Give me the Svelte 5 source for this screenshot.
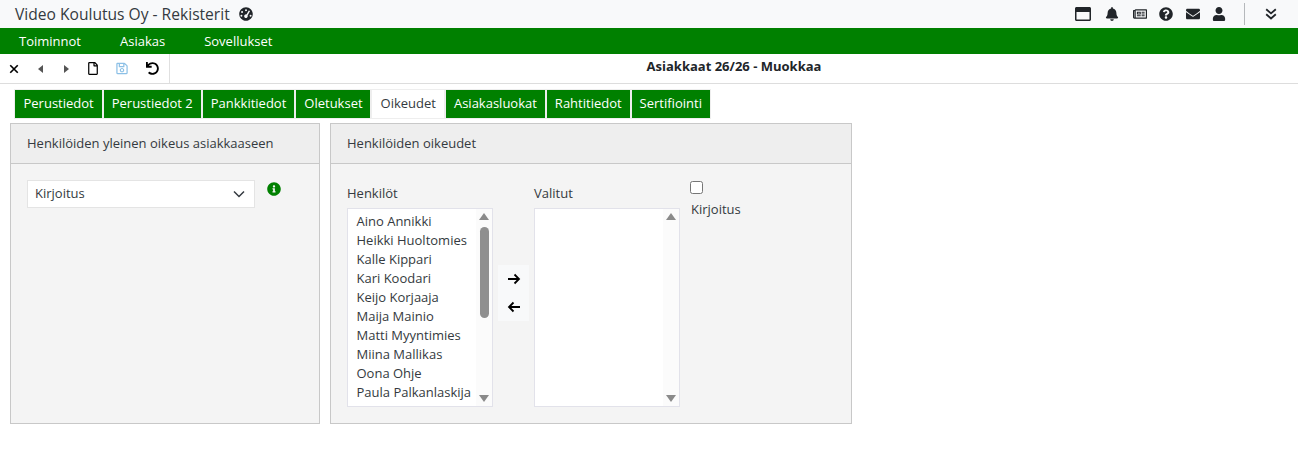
<script>
  const tabs = ['Perustiedot','Perustiedot 2','Pankkitiedot','Oletukset','Oikeudet','Asiakasluokat','Rahtitiedot','Sertifiointi'];
  const people = ['Aino Annikki','Heikki Huoltomies','Kalle Kippari','Kari Koodari','Keijo Korjaaja','Maija Mainio','Matti Myyntimies','Miina Mallikas','Oona Ohje','Paula Palkanlaskija'];
  const menu = ['Toiminnot','Asiakas','Sovellukset'];
</script>

<header class="top">
  <div class="brand">
    <span>Video Koulutus Oy - Rekisterit</span>
    <svg class="gauge" viewBox="0 0 512 512"><path fill="#212529" fill-rule="evenodd" d="M256 8C119 8 8 119 8 256s111 248 248 248 248-111 248-248S393 8 256 8zm0 72a36 36 0 1 1 0 72 36 36 0 0 1 0-72zM112 150a36 36 0 1 1 0 72 36 36 0 0 1 0-72zm-24 130a36 36 0 1 1 0 72 36 36 0 0 1 0-72zm336 0a36 36 0 1 1 0 72 36 36 0 0 1 0-72zM356 128l50 20-92 166c14 34-4 72-40 84-36 10-72-10-82-44-10-36 12-72 48-82 12-4 24-4 34-2z"/></svg>
  </div>
  <div class="tools">
    <svg class="win" viewBox="0 0 512 512"><path d="M464 32H48C21.500 32 0 53.500 0 80v352c0 26.500 21.500 48 48 48h416c26.500 0 48-21.500 48-48V80c0-26.500-21.500-48-48-48zm-6 400H54c-3.300 0-6-2.700-6-6V192h416v234c0 3.300-2.700 6-6 6z"/></svg>
    <svg class="i14 bell" viewBox="0 0 448 512"><path d="M224 512c35.320 0 63.970-28.650 63.970-64H160.030c0 35.350 28.650 64 63.970 64zm215.390-149.710c-19.320-20.760-55.470-51.990-55.470-154.290 0-77.700-54.480-139.900-127.940-155.160V32c0-17.670-14.320-32-31.980-32s-31.980 14.330-31.980 32v20.840C118.560 68.100 64.080 130.300 64.080 208c0 102.300-36.150 133.530-55.470 154.290-6 6.450-8.660 14.160-8.610 21.710.11 16.400 12.980 32 32.100 32h383.800c19.120 0 32-15.600 32.100-32 .05-7.550-2.610-15.270-8.610-21.710z"/></svg>
    <svg class="i14" viewBox="0 0 576 512"><path d="M552 64H112c-20.858 0-38.643 13.377-45.250 32H24c-13.255 0-24 10.745-24 24v272c0 30.928 25.072 56 56 56h496c13.255 0 24-10.745 24-24V88c0-13.255-10.745-24-24-24zM48 392V144h16v248c0 4.411-3.589 8-8 8s-8-3.589-8-8zm480 8H111.422c.374-2.614.578-5.283.578-8V112h416v288zM172 280h136c6.627 0 12-5.373 12-12v-96c0-6.627-5.373-12-12-12H172c-6.627 0-12 5.373-12 12v96c0 6.627 5.373 12 12 12zm28-80h80v40h-80v-40zm-40 140v-24c0-6.627 5.373-12 12-12h136c6.627 0 12 5.373 12 12v24c0 6.627-5.373 12-12 12H172c-6.627 0-12-5.373-12-12zm192 0v-24c0-6.627 5.373-12 12-12h104c6.627 0 12 5.373 12 12v24c0 6.627-5.373 12-12 12H364c-6.627 0-12-5.373-12-12zm0-144v-24c0-6.627 5.373-12 12-12h104c6.627 0 12 5.373 12 12v24c0 6.627-5.373 12-12 12H364c-6.627 0-12-5.373-12-12zm0 72v-24c0-6.627 5.373-12 12-12h104c6.627 0 12 5.373 12 12v24c0 6.627-5.373 12-12 12H364c-6.627 0-12-5.373-12-12z"/></svg>
    <svg class="i14" viewBox="0 0 512 512"><path d="M504 256c0 136.997-111.043 248-248 248S8 392.997 8 256C8 119.083 119.043 8 256 8s248 111.083 248 248zM262.655 90c-54.497 0-89.255 22.957-116.549 63.758-3.536 5.286-2.353 12.415 2.715 16.258l34.699 26.310c5.205 3.947 12.621 3.008 16.665-2.122 17.864-22.658 30.113-35.797 57.303-35.797 20.429 0 45.698 13.148 45.698 32.958 0 14.976-12.363 22.667-32.534 33.976C247.128 238.528 216 254.941 216 296v4c0 6.627 5.373 12 12 12h56c6.627 0 12-5.373 12-12v-1.333c0-28.462 83.186-29.647 83.186-106.667 0-58.002-60.165-102-116.531-102zM256 338c-25.365 0-46 20.635-46 46 0 25.364 20.635 46 46 46s46-20.636 46-46c0-25.365-20.635-46-46-46z"/></svg>
    <svg class="i14" viewBox="0 0 512 512"><path d="M502.300 190.800c3.900-3.100 9.700-.2 9.700 4.700V400c0 26.500-21.500 48-48 48H48c-26.500 0-48-21.500-48-48V195.600c0-5 5.700-7.800 9.700-4.700 22.400 17.400 52.100 39.500 154.100 113.600 21.100 15.400 56.700 47.800 92.200 47.600 35.700.3 72-32.800 92.300-47.600 102-74.100 131.600-96.300 154-113.700zM256 320c23.200.4 56.600-29.200 73.400-41.400 132.700-96.300 142.800-104.700 173.400-128.700 5.800-4.500 9.200-11.500 9.200-18.900v-19c0-26.500-21.500-48-48-48H48C21.500 64 0 85.500 0 112v19c0 7.400 3.400 14.300 9.200 18.900 30.600 23.900 40.700 32.400 173.400 128.700 16.800 12.200 50.200 41.800 73.400 41.400z"/></svg>
    <svg class="i14 last" viewBox="0 0 448 512"><path d="M224 256c70.700 0 128-57.300 128-128S294.700 0 224 0 96 57.300 96 128s57.300 128 128 128zm89.600 32h-16.700c-22.200 10.200-46.900 16-72.900 16s-50.600-5.800-72.900-16h-16.700C60.200 288 0 348.200 0 422.400V464c0 26.500 21.500 48 48 48h352c26.500 0 48-21.500 48-48v-41.600c0-74.200-60.200-134.400-134.400-134.400z"/></svg>
    <span class="sep"></span>
    <svg class="dbl" viewBox="0 0 12 12"><path d="M1.200 1.200L6 5.400l4.800-4.200M1.200 6.300L6 10.500l4.800-4.200" fill="none" stroke="#212529" stroke-width="1.800"/></svg>
  </div>
</header>

<nav class="menu">
  {#each menu as m}<span>{m}</span>{/each}
</nav>

<div class="bar">
  <div class="actions">
    <svg viewBox="0 0 12 12" class="x"><path d="M1.500 1.500l9 9M10.500 1.500l-9 9" stroke="#000" stroke-width="2" fill="none"/></svg>
    <svg viewBox="0 0 12 12" class="l"><path d="M8 2v8L3 6z" fill="#555"/></svg>
    <svg viewBox="0 0 12 12" class="r"><path d="M4 2v8l5-4z" fill="#555"/></svg>
    <svg viewBox="0 0 384 512" class="f"><path d="M369.900 97.900L286 14C277 5 264.800-.1 252.100-.1H48C21.500 0 0 21.500 0 48v416c0 26.500 21.500 48 48 48h288c26.500 0 48-21.500 48-48V131.900c0-12.700-5.100-25-14.100-34zM332.100 128H256V51.900l76.100 76.100zM48 464V48h160v104c0 13.300 10.700 24 24 24h104v288H48z"/></svg>
    <svg viewBox="0 0 448 512" class="s"><path fill="#8cc0e6" d="M433.900 129.900l-83.900-83.900A48 48 0 0 0 316.100 32H48C21.500 32 0 53.500 0 80v352c0 26.500 21.500 48 48 48h352c26.500 0 48-21.500 48-48V163.900a48 48 0 0 0-14.100-34zM272 80v80H144V80h128zm122 352H54a6 6 0 0 1-6-6V86a6 6 0 0 1 6-6h42v104c0 13.300 10.700 24 24 24h176c13.300 0 24-10.700 24-24V83.900l78.200 78.200a6 6 0 0 1 1.800 4.200V426a6 6 0 0 1-6 6zM224 232c-48.500 0-88 39.500-88 88s39.500 88 88 88 88-39.500 88-88-39.500-88-88-88zm0 128c-22.100 0-40-17.900-40-40s17.900-40 40-40 40 17.900 40 40-17.900 40-40 40z"/></svg>
    <svg viewBox="0 0 512 512" class="u"><path d="M212.300 224.300H12c-6.600 0-12-5.400-12-12V12C0 5.400 5.400 0 12 0h48c6.600 0 12 5.400 12 12v78.100C117.800 39.300 184.300 7.500 258.200 8c136.900 1 246.400 111.600 246.200 248.500C504 393.300 393.100 504 256.300 504c-64.100 0-122.500-24.300-166.500-64.200-5.100-4.600-5.300-12.600-.5-17.400l34-34c4.500-4.500 11.700-4.700 16.400-.5C170.800 415.300 211.600 432 256.300 432c97.300 0 176-78.700 176-176 0-97.300-78.700-176-176-176-58.500 0-110.300 28.500-142.300 72.300h98.300c6.600 0 12 5.400 12 12v48c0 6.600-5.400 12-12 12z"/></svg>
  </div>
  <div class="heading">Asiakkaat 26/26 - Muokkaa</div>
</div>

<div class="tabs">
  {#each tabs as t}
    <span class="tab" class:active={t === 'Oikeudet'}>{t}</span>
  {/each}
</div>

<main class="panels">
  <section class="panel left">
    <h3>Henkilöiden yleinen oikeus asiakkaaseen</h3>
    <div class="body selrow">
      <div class="select">
        <span>Kirjoitus</span>
        <svg viewBox="0 0 12 8" class="chev"><path d="M1 1.500l5 5 5-5" fill="none" stroke="#343a40" stroke-width="1.500"/></svg>
      </div>
      <svg class="info" viewBox="0 0 512 512"><path fill="#008000" d="M256 8C119.043 8 8 119.083 8 256c0 136.997 111.043 248 248 248s248-111.003 248-248C504 119.083 392.957 8 256 8zm0 110c23.196 0 42 18.804 42 42s-18.804 42-42 42-42-18.804-42-42 18.804-42 42-42zm56 254c0 6.627-5.373 12-12 12h-88c-6.627 0-12-5.373-12-12v-24c0-6.627 5.373-12 12-12h12v-64h-12c-6.627 0-12-5.373-12-12v-24c0-6.627 5.373-12 12-12h64c6.627 0 12 5.373 12 12v100h12c6.627 0 12 5.373 12 12v24z"/></svg>
    </div>
  </section>

  <section class="panel right">
    <h3>Henkilöiden oikeudet</h3>
    <div class="body lists">
      <div class="col">
        <div class="label">Henkilöt</div>
        <div class="list">
          <div class="items">
            {#each people as p}<div class="item">{p}</div>{/each}
          </div>
          <div class="sb">
            <i class="up"></i>
            <b class="thumb"></b>
            <i class="down"></i>
          </div>
        </div>
      </div>
      <div class="move">
        <svg viewBox="0 0 14 12"><path d="M1 6h11M7.500 1.500L12 6l-4.500 4.500" fill="none" stroke="#000" stroke-width="1.800"/></svg>
        <svg viewBox="0 0 14 12"><path d="M13 6H2M6.500 1.500L2 6l4.500 4.500" fill="none" stroke="#000" stroke-width="1.800"/></svg>
      </div>
      <div class="col">
        <div class="label">Valitut</div>
        <div class="list">
          <div class="items"></div>
          <div class="sb"><i class="up"></i><i class="down"></i></div>
        </div>
      </div>
      <div class="check">
        <span class="box"></span>
        <span class="checklabel">Kirjoitus</span>
      </div>
    </div>
  </section>
</main>

<style>
  :global(body) { margin: 0; background: #fff; font-family: "Open Sans", sans-serif; font-size: 13px; color: #343a40; }
  svg { display: block; }
  .top { height: 28px; background: #f8f9fa; display: flex; justify-content: space-between; align-items: center; }
  .brand { display: flex; align-items: center; margin-left: 15px; font-size: 15.600px; color: #343a40; gap: 9px; }
  .gauge { width: 14px; height: 14px; }
  .tools { display: flex; align-items: center; height: 100%; margin-right: 21px; }
  .tools svg { fill: #212529; }
  .win { width: 16px; height: 16px; margin-right: 13.500px; }
  .i14 { width: 14px; height: 14px; margin-right: 12.500px; }
  .i14.bell { margin-right: 14px; }
  .i14.last { margin-right: 0; }
  .sep { width: 1px; height: 22px; background: #b5b8bb; margin: 0 20px 0 18px; }
  .dbl { width: 12px; height: 12px; }
  .menu { height: 26px; background: #008000; color: #fff; display: flex; align-items: center; padding-left: 19px; gap: 39px; line-height: 26px; }
  .bar { height: 29px; display: flex; border-bottom: 1px solid #ddd; }
  .actions { width: 170px; height: 29px; border-right: 1px solid #e0e0e0; display: flex; align-items: center; padding-left: 9px; box-sizing: border-box; }
  .x { width: 10px; height: 10px; margin-right: 15.500px; }
  .l { width: 12px; height: 12px; margin-right: 13.500px; }
  .r { width: 12px; height: 12px; margin-right: 16px; }
  .f { width: 10px; height: 13px; margin-right: 18px; }
  .s { width: 12px; height: 13px; margin-right: 18px; }
  .u { width: 13px; height: 13px; }
  .heading { flex: 1; text-align: center; font-weight: 700; color: #212529; line-height: 25px; font-size: 13px; }
  .tabs { display: flex; gap: 2px; padding: 6px 0 0 15.400px; height: 28px; }
  .tab { background: #008000; color: #fff; padding: 0 7.900px 0 8.100px; line-height: 27px; height: 28px; box-sizing: border-box; box-shadow: 0 0 0 1px #eee; }
  .tab.active { background: #fff; color: #343a40; }
  .panels { display: flex; gap: 10px; padding: 5px 0 0 10px; }
  .panel { height: 301px; box-sizing: border-box; background: #f4f4f4; border: 1px solid #c8c8c8; }
  .left { width: 310px; }
  .right { width: 522px; }
  h3 { margin: 0; font-weight: 400; font-size: 13px; height: 40px; line-height: 39px; padding-left: 16px; background: #eee; border-bottom: 1px solid #c8c8c8; color: #343a40; box-sizing: border-box; }
  .selrow { display: flex; padding: 16px; gap: 11.500px; align-items: flex-start; }
  .select { width: 228px; height: 28px; background: #fff; border: 1px solid #e4e4e4; box-sizing: border-box; display: flex; align-items: center; justify-content: space-between; padding: 0 9px 2px 7px; }
  .chev { width: 12px; height: 8px; margin-top: 2px; }
  .info { width: 14px; height: 14px; margin-top: 2px; }
  .lists { display: flex; padding: 20px 16px 0; align-items: flex-start; }
  .col { width: 146px; }
  .label { line-height: 18px; height: 24px; }
  .list { height: 199px; box-sizing: border-box; background: #fff; border: 1px solid #e2e2ea; display: flex; }
  .items { flex: 1; padding: 3px 0 0 8.500px; }
  .item { height: 19px; line-height: 18px; white-space: nowrap; }
  .sb { width: 16px; background: #fbfbfb; display: flex; flex-direction: column; align-items: center; padding: 4px 0; box-sizing: border-box; }
  .up, .down { width: 0; height: 0; border-left: 5px solid transparent; border-right: 5px solid transparent; }
  .up { border-bottom: 7px solid #8a8a8a; }
  .down { border-top: 7px solid #8a8a8a; margin-top: auto; }
  .thumb { width: 9px; height: 91px; background: #8f8f8f; border-radius: 5px; margin-top: 7px; }
  .move { height: 56px; width: 31px; background: #f8f9fa; margin: 81px 5px 0 5px; display: flex; flex-direction: column; align-items: center; justify-content: space-around; }
  .move svg { width: 14px; height: 12px; }
  .check { display: flex; flex-direction: column; margin-left: 10px; margin-top: -3px; gap: 6px; }
  .checklabel { margin-left: 1px; }
  .box { width: 11px; height: 11px; border: 1px solid #767676; border-radius: 2.500px; background: #fff; }
</style>
